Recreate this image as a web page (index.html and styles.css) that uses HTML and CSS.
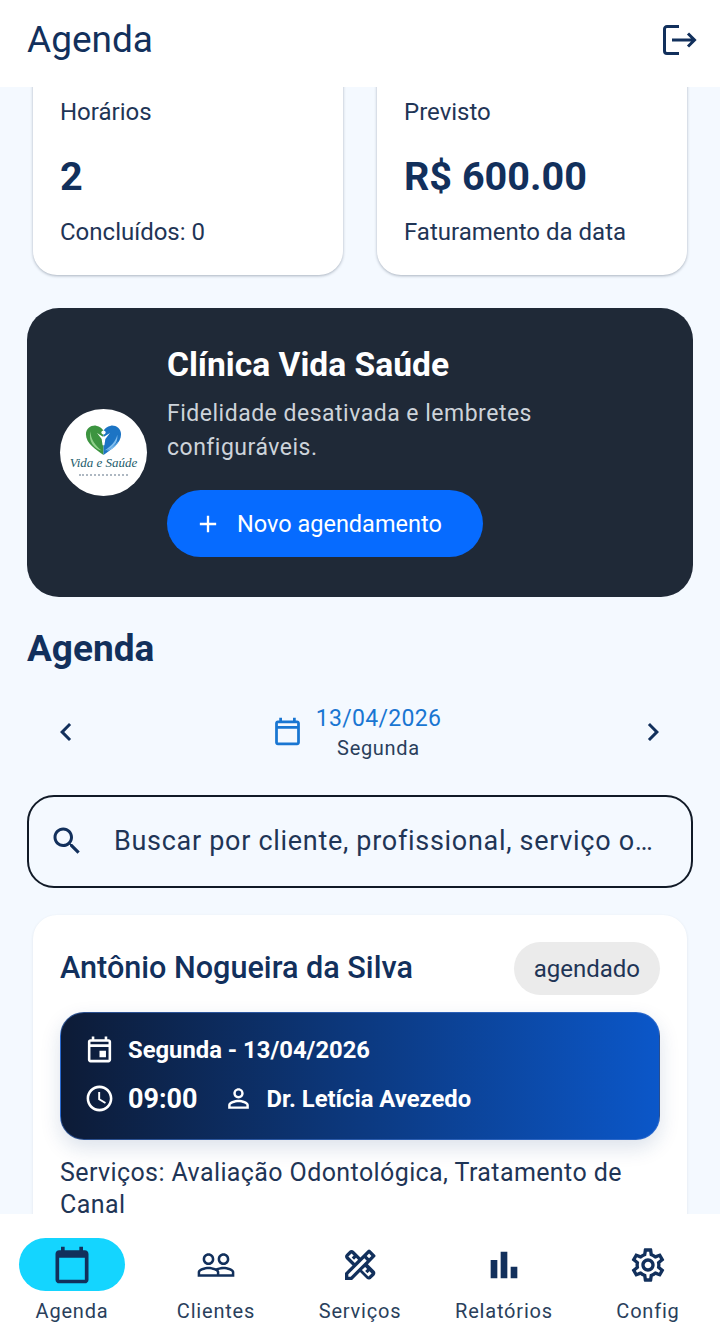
FILE: index.html
```html
<!DOCTYPE html>
<html lang="pt">
<head>
<meta charset="utf-8">
<title>Agenda</title>
<link rel="stylesheet" href="styles.css">
</head>
<body>
<div class="app">
  <header class="topbar">
    <h1 class="topbar-title">Agenda</h1>
    <svg class="logout" viewBox="0 0 36 36" fill="none" stroke="currentColor" stroke-width="3"><path d="M18 4.500H6A2.500 2.500 0 0 0 3.500 7V29A2.500 2.500 0 0 0 6 31.500H18"/><path d="M11 18H33.500M27 11.500l6.500 6.500-6.500 6.500"/></svg>
  </header>
  <main class="scroll">
    <div class="content">
      <section class="stats">
        <article class="stat">
          <p class="stat-label">Horários</p>
          <p class="stat-value">2</p>
          <p class="stat-label">Concluídos: 0</p>
        </article>
        <article class="stat">
          <p class="stat-label">Previsto</p>
          <p class="stat-value">R$ 600.00</p>
          <p class="stat-label">Faturamento da data</p>
        </article>
      </section>
      <section class="hero">
        <div class="logo">
          <svg class="logo-heart" viewBox="0 0 40 34" preserveAspectRatio="none"><path fill="#3c9440" d="M20 34C12 28 1 21 1 10.500 1 4 7 0 12 .8c4 .7 7 3 8 6z"/><path fill="#1c74c4" d="M20 34c8-6 19-13 19-23.500C39 4 33 0 28 .8c-4 .7-7 3-8 6z"/><path fill="#8fcf8a" d="M6 7c0 9 5 16 12 22C10 27 3 18 6 7z"/><path fill="#7fbdee" d="M35 11c-2 8-7 13-14 18 8-2 15-8 14-18zM36 18c-3 5-8 9-13 11 6 0 11-5 13-11z"/><circle fill="#fff" cx="20" cy="8.500" r="2.300"/><path fill="#fff" d="M13 9l6 4h2l6-4-5 7-1 7h-2l-1-7z"/></svg>
          <span class="logo-name">Vida e Saúde</span>
          <span class="logo-rule"></span>
        </div>
        <div class="hero-body">
          <h2 class="hero-title">Clínica Vida Saúde</h2>
          <p class="hero-text">Fidelidade desativada e lembretes configuráveis.</p>
          <button class="cta">
            <svg class="cta-plus" viewBox="0 0 24 24" fill="currentColor"><path d="M19 13h-6v6h-2v-6H5v-2h6V5h2v6h6v2z"/></svg>
            <span>Novo agendamento</span>
          </button>
        </div>
      </section>
      <h2 class="section-title">Agenda</h2>
      <div class="datebar">
        <svg class="chev" viewBox="0 0 24 24" fill="currentColor"><path d="M15.410 7.410 14 6l-6 6 6 6 1.410-1.410L10.830 12z"/></svg>
        <div class="date-center">
          <svg class="date-icon" viewBox="0 0 24 24" fill="currentColor"><path d="M19 4h-1V2h-2v2H8V2H6v2H5c-1.100 0-2 .9-2 2v14c0 1.100.9 2 2 2h14c1.100 0 2-.9 2-2V6c0-1.100-.9-2-2-2zm0 16H5V10h14v10zm0-12H5V6h14v2z"/></svg>
          <div class="date-text">
            <span class="date-main">13/04/2026</span>
            <span class="date-sub">Segunda</span>
          </div>
        </div>
        <svg class="chev" viewBox="0 0 24 24" fill="currentColor"><path d="M10 6 8.590 7.410 13.170 12l-4.580 4.590L10 18l6-6z"/></svg>
      </div>
      <div class="search">
        <svg class="search-icon" viewBox="0 0 24 24" fill="currentColor"><path d="M15.500 14h-.79l-.28-.27C15.410 12.590 16 11.110 16 9.500 16 5.910 13.090 3 9.500 3S3 5.910 3 9.500 5.910 16 9.500 16c1.610 0 3.090-.59 4.230-1.570l.27.28v.79l5 4.990L20.490 19l-4.990-5zm-6 0C7.010 14 5 11.990 5 9.500S7.010 5 9.500 5 14 7.010 14 9.500 11.990 14 9.500 14z"/></svg>
        <span class="search-text">Buscar por cliente, profissional, serviço o…</span>
      </div>
      <article class="appt">
        <div class="appt-head">
          <h3 class="appt-name">Antônio Nogueira da Silva</h3>
          <span class="badge">agendado</span>
        </div>
        <div class="slot">
          <div class="slot-row">
            <svg class="slot-icon" viewBox="0 0 24 24" fill="currentColor"><path d="M19 4h-1V2h-2v2H8V2H6v2H5c-1.110 0-1.990.9-1.990 2L3 20c0 1.100.89 2 2 2h14c1.100 0 2-.9 2-2V6c0-1.100-.9-2-2-2zm0 16H5V10h14v10zm0-12H5V6h14v2zm-7 5h5v5h-5z"/></svg>
            <span class="slot-date">Segunda - 13/04/2026</span>
          </div>
          <div class="slot-row">
            <svg class="slot-icon" viewBox="0 0 24 24" fill="currentColor"><path d="M11.990 2C6.470 2 2 6.480 2 12s4.470 10 9.990 10C17.520 22 22 17.520 22 12S17.520 2 11.990 2zM12 20c-4.420 0-8-3.580-8-8s3.580-8 8-8 8 3.580 8 8-3.580 8-8 8zm.5-13H11v6l5.250 3.150.75-1.230-4.500-2.670z"/></svg>
            <span class="slot-time">09:00</span>
            <svg class="slot-icon slot-person" viewBox="0 0 24 24" fill="currentColor"><path d="M12 5.900a2.100 2.100 0 1 1 0 4.200 2.100 2.100 0 0 1 0-4.200m0 9c2.970 0 6.100 1.460 6.100 2.100v1.100H5.900V17c0-.64 3.130-2.100 6.100-2.100M12 4C9.790 4 8 5.790 8 8s1.790 4 4 4 4-1.790 4-4-1.790-4-4-4zm0 9c-2.670 0-8 1.340-8 4v3h16v-3c0-2.660-5.330-4-8-4z"/></svg>
            <span class="slot-date">Dr. Letícia Avezedo</span>
          </div>
        </div>
        <p class="appt-services">Serviços: Avaliação Odontológica, Tratamento de Canal</p>
      </article>
    </div>
  </main>
  <nav class="tabs">
    <div class="tab">
      <span class="tab-pill tab-pill-on"><svg class="tab-icon tab-icon-on" viewBox="0 0 24 24" fill="currentColor"><path d="M19 4h-1V2h-2v2H8V2H6v2H5c-1.100 0-2 .9-2 2v14c0 1.100.9 2 2 2h14c1.100 0 2-.9 2-2V6c0-1.100-.9-2-2-2zm0 16H5V8h14v12z"/></svg></span>
      <span class="tab-label">Agenda</span>
    </div>
    <div class="tab">
      <span class="tab-pill"><svg class="tab-icon" viewBox="0 0 24 24" fill="currentColor"><path d="M16.500 13c-1.200 0-3.070.34-4.500 1-1.430-.67-3.300-1-4.500-1C5.330 13 1 14.080 1 16.250V19h22v-2.750c0-2.170-4.330-3.250-6.500-3.250zm-4 4.500h-10v-1.250c0-.54 2.560-1.750 5-1.750s5 1.210 5 1.750v1.250zm9 0H14v-1.250c0-.46-.2-.86-.52-1.220.88-.3 1.960-.53 3.020-.53 2.440 0 5 1.210 5 1.750v1.250zM7.500 12c1.930 0 3.500-1.570 3.500-3.500S9.430 5 7.500 5 4 6.570 4 8.500 5.570 12 7.500 12zm0-5.500c1.100 0 2 .9 2 2s-.9 2-2 2-2-.9-2-2 .9-2 2-2zm9 5.500c1.930 0 3.500-1.570 3.500-3.500S18.430 5 16.500 5 13 6.570 13 8.500s1.570 3.500 3.500 3.500zm0-5.500c1.100 0 2 .9 2 2s-.9 2-2 2-2-.9-2-2 .9-2 2-2z"/></svg></span>
      <span class="tab-label">Clientes</span>
    </div>
    <div class="tab">
      <span class="tab-pill"><svg class="tab-icon" viewBox="0 0 24 24" fill="currentColor"><path d="M20.970 7.270a.996.996 0 0 0 0-1.410l-2.830-2.830a.996.996 0 0 0-1.410 0l-4.490 4.490-3.890-3.890c-.78-.78-2.050-.78-2.830 0l-1.900 1.900c-.78.78-.78 2.050 0 2.830l3.890 3.890L3 16.750V21h4.250l4.760-4.760 3.890 3.890c.95.95 2.230.6 2.830 0l1.900-1.900c.78-.78.78-2.050 0-2.830l-3.890-3.890 4.230-4.240zM5.040 6.940l1.890-1.900L8.200 6.310 7.020 7.500l1.410 1.410 1.190-1.190 1.200 1.200-1.900 1.900-3.880-3.880zm11.230 7.440-1.190 1.190 1.410 1.410 1.190-1.190 1.270 1.270-1.900 1.900-3.890-3.890 1.900-1.900 1.210 1.210zM6.420 19H5v-1.420l9.610-9.610 1.300 1.300.11.11L6.420 19zm9.610-12.440 1.410-1.410 1.410 1.410-1.410 1.410-1.410-1.410z"/></svg></span>
      <span class="tab-label">Serviços</span>
    </div>
    <div class="tab">
      <span class="tab-pill"><svg class="tab-icon" viewBox="0 0 24 24" fill="currentColor"><path d="M4 9h4v11H4zM16 13h4v7h-4zM10 4h4v16h-4z"/></svg></span>
      <span class="tab-label">Relatórios</span>
    </div>
    <div class="tab">
      <span class="tab-pill"><svg class="tab-icon" viewBox="0 0 24 24" fill="currentColor"><path d="M19.430 12.980c.04-.32.07-.64.07-.98 0-.34-.03-.66-.07-.98l2.110-1.650c.19-.15.24-.42.12-.64l-2-3.460a.5.5 0 0 0-.61-.22l-2.490 1c-.52-.4-1.080-.73-1.690-.98l-.38-2.650A.488.488 0 0 0 14 2h-4c-.25 0-.46.18-.49.42l-.38 2.650c-.61.25-1.170.59-1.690.98l-2.490-1a.566.566 0 0 0-.18-.03c-.17 0-.34.09-.43.25l-2 3.460c-.13.22-.07.49.12.64l2.110 1.650c-.04.32-.07.65-.07.98 0 .33.03.66.07.98l-2.110 1.650c-.19.15-.24.42-.12.64l2 3.460a.5.5 0 0 0 .61.22l2.490-1c.52.4 1.080.73 1.690.98l.38 2.650c.03.24.24.42.49.42h4c.25 0 .46-.18.49-.42l.38-2.650c.61-.25 1.170-.59 1.690-.98l2.490 1c.06.02.12.03.18.03.17 0 .34-.09.43-.25l2-3.460c.12-.22.07-.49-.12-.64l-2.110-1.650zm-1.980-1.710c.04.31.05.52.05.73 0 .21-.02.43-.05.73l-.14 1.130.89.7 1.080.84-.7 1.210-1.270-.51-1.040-.42-.9.68c-.43.32-.84.56-1.250.73l-1.060.43-.16 1.130-.2 1.350h-1.400l-.19-1.350-.16-1.130-1.060-.43c-.43-.18-.83-.41-1.230-.71l-.91-.7-1.060.43-1.270.51-.7-1.210 1.080-.84.89-.7-.14-1.130c-.03-.31-.05-.54-.05-.74s.02-.43.05-.73l.14-1.130-.89-.7-1.080-.84.7-1.210 1.270.51 1.040.42.9-.68c.43-.32.84-.56 1.250-.73l1.060-.43.16-1.130.2-1.350h1.390l.19 1.350.16 1.130 1.060.43c.43.18.83.41 1.230.71l.91.7 1.060-.43 1.270-.51.7 1.210-1.070.85-.89.7.14 1.130zM12 8c-2.210 0-4 1.790-4 4s1.790 4 4 4 4-1.790 4-4-1.790-4-4-4zm0 6c-1.100 0-2-.9-2-2s.9-2 2-2 2 .9 2 2-.9 2-2 2z"/></svg></span>
      <span class="tab-label">Config</span>
    </div>
  </nav>
</div>
</body>
</html>
```
FILE: styles.css
```css
* { box-sizing: border-box; }
html, body { margin: 0; padding: 0; height: 100%; }
body { font-family: Roboto, "Noto Sans", sans-serif; color: #12305c; background: #f4f9ff; }
p, h1, h2, h3 { margin: 0; font-weight: 400; }
.app { width: 720px; height: 1333px; display: flex; flex-direction: column; overflow: hidden; }

.topbar { flex: none; height: 87px; background: #fff; display: flex; align-items: center; justify-content: space-between; padding: 0 23px 8px 27px; position: relative; z-index: 2; }
.topbar-title { font-size: 37px; line-height: 44px; color: #12305c; }
.logout { width: 36px; height: 36px; color: #12305c; }

.scroll { flex: 1; min-height: 0; overflow: hidden; }
.content { margin-top: -32px; padding: 0 27px; display: flex; flex-direction: column; }

.stats { display: grid; grid-template-columns: 1fr 1fr; gap: 34px; padding: 0 6px; }
.stat { height: 220px; background: #fff; border-radius: 24px; padding: 43px 27px 0; box-shadow: 0 1px 3px rgba(30, 45, 70, .35); }
.stat-label { font-size: 24px; line-height: 28px; color: #1f3556; }
.stat-value { font-size: 39.600px; line-height: 50px; font-weight: 700; color: #12305c; margin: 26px 0 16px; white-space: nowrap; }

.hero { margin-top: 33px; height: 289px; background: #1f2937; border-radius: 32px; padding: 0 33px; display: flex; align-items: center; gap: 20px; }
.logo { flex: none; width: 87px; height: 87px; border-radius: 50%; background: #fff; display: flex; flex-direction: column; align-items: center; overflow: hidden; padding-top: 16px; }
.logo-heart { width: 37px; height: 30px; flex: none; }
.logo-name { font-family: "Liberation Serif", serif; font-style: italic; font-size: 13px; line-height: 15px; color: #1d5c6b; white-space: nowrap; }
.logo-rule { width: 49px; height: 0; margin-top: 4px; border-top: 2px dotted #aeb8c2; flex: none; }
.hero-body { flex: 1; min-width: 0; padding-bottom: 3px; }
.hero-title { font-size: 33.600px; line-height: 40px; font-weight: 700; color: #fff; }
.hero-text { font-size: 23px; line-height: 34px; letter-spacing: .5px; color: #cdd3da; margin-top: 12px; }
.cta { margin-top: 25px; height: 67px; width: 316px; border: 0; border-radius: 34px; background: #066bff; color: #fff; display: flex; align-items: center; padding: 0 0 0 27px; gap: 15px; font: 400 23.500px Roboto, sans-serif; }
.cta-plus { width: 28px; height: 28px; }

.section-title { font-size: 37px; line-height: 44px; font-weight: 700; color: #12305c; margin-top: 30px; }
.datebar { margin-top: 29px; display: flex; align-items: center; justify-content: space-between; padding: 0 22px 0 21px; height: 63px; }
.chev { width: 36px; height: 36px; color: #12305c; }
.date-center { display: flex; align-items: center; gap: 12px; margin-right: 7px; }
.date-icon { width: 33px; height: 33px; color: #1976d2; }
.date-text { display: flex; flex-direction: column; align-items: center; }
.date-main { font-size: 23px; line-height: 32px; letter-spacing: .3px; color: #1976d2; }
.date-sub { font-size: 20px; line-height: 26px; letter-spacing: .7px; color: #2a3f5c; }

.search { margin-top: 32px; height: 93px; border: 2px solid #111a27; border-radius: 27px; display: flex; align-items: center; padding: 0 20px 2px; gap: 29px; }
.search-icon { width: 36px; height: 36px; color: #12305c; flex: none; }
.search-text { flex: 1; min-width: 0; font-size: 27px; letter-spacing: .7px; color: #1f3556; white-space: nowrap; }

.appt { margin: 27px 6px 0; background: #fff; border-radius: 24px; padding: 27px 27px 0; height: 340px; box-shadow: 0 1px 3px rgba(30, 45, 70, .1); }
.appt-head { display: flex; align-items: center; justify-content: space-between; }
.appt-name { font-size: 30.600px; line-height: 36px; font-weight: 500; color: #12305c; padding-bottom: 2px; }
.badge { height: 53px; padding: 0 20px; border-radius: 27px; background: #ebebeb; color: #1f3556; font-size: 24px; display: flex; align-items: center; }
.slot { margin-top: 17px; height: 128px; border-radius: 24px; border: 1px solid rgba(70, 120, 210, .55); background: linear-gradient(90deg, #0d1b36, #0b57c9); color: #fff; padding: 0 26px 4px; display: flex; flex-direction: column; justify-content: center; gap: 13px; box-shadow: 0 8px 20px rgba(20, 60, 120, .15); }
.slot-row { display: flex; align-items: center; height: 36px; }
.slot-icon { width: 31px; height: 31px; flex: none; margin-right: 13px; margin-left: -3px; }
.slot-person { margin-left: 25px; margin-right: 13px; }
.slot-date { font-size: 23.800px; font-weight: 700; }
.slot-time { font-size: 27px; font-weight: 700; }
.appt-services { margin-top: 17px; font-size: 25px; line-height: 32px; letter-spacing: .4px; color: #1f3556; }

.tabs { flex: none; height: 119px; background: #fff; display: grid; grid-template-columns: repeat(5, 144px); position: relative; z-index: 2; }
.tab { display: flex; flex-direction: column; align-items: center; padding-top: 24px; }
.tab-pill { width: 106px; height: 53px; border-radius: 27px; display: flex; align-items: center; justify-content: center; }
.tab-pill-on { background: #14d5ff; }
.tab-icon { width: 40px; height: 40px; color: #12305c; }
.tab-icon-on { width: 44px; height: 44px; }
.tab-label { margin-top: 6px; font-size: 20px; line-height: 28px; letter-spacing: .8px; color: #2a3f5c; }
```
